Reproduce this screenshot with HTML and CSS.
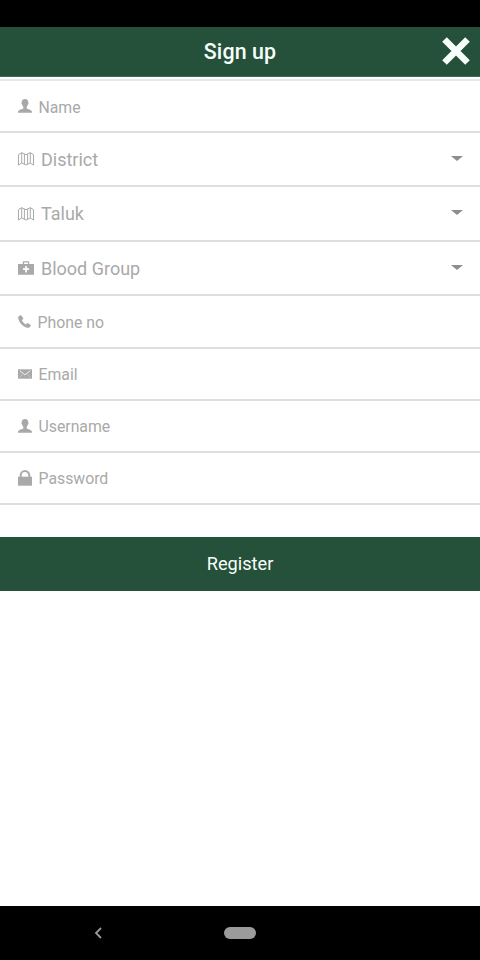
FILE: index.html
```html
<!DOCTYPE html>
<html lang="en">
<head>
<meta charset="utf-8">
<title>Sign up</title>
<link rel="stylesheet" href="styles.css">
</head>
<body>
<svg width="0" height="0" class="defs">
  <symbol id="person" viewBox="0 0 14 14"><path d="M7 0C4.700 0 3.700 1.400 3.700 3.300c0 .5-.4.600-.2 1.400.2.700.5.600.7 1.100C4.500 6.900 5 7.600 5.300 8v1.500C4.500 10.300.4 10.400 0 12.800v.9h14v-.9c-.4-2.400-4.500-2.500-5.300-3.300V8c.3-.4.8-1.100 1.100-2.200.2-.5.5-.4.7-1.100.2-.8-.2-.9-.2-1.400C10.300 1.400 9.300 0 7 0Z"/></symbol>
  <symbol id="map" viewBox="0 0 16 14"><path fill="none" stroke="currentColor" stroke-width="1" d="M.5 2.700 3.700.7 8 2.700l4.300-2L15.500 2.700v10.300L12.300 11 8 13 3.700 11 .5 13ZM3.700.7V11M12.300.7V11M6.400 2v10.200M9.600 2v10.200"/></symbol>
  <symbol id="medkit" viewBox="0 0 16 14"><path fill-rule="evenodd" d="M0 3h4.800V1.200Q4.800.3 5.700.3h4.600q.9 0 .9.900V3H16v10.700H0ZM6 3h4V1.500H6Zm1.200 2v2.300H5v1.800h2.200v2.300h1.700V9.100h2.200V7.300H8.900V5Z"/></symbol>
  <symbol id="phone" viewBox="0 0 13 13"><path d="M2.400.2C.5.700-.2 2.200.3 3.800c1.200 4.300 4.600 7.800 8.900 8.900 1.700.4 3-.4 3.500-2.200.1-.3 0-.5-.3-.7L10 8.200c-.5-.3-.9-.2-1.200.2l-.9 1C6.300 8.500 4.800 7 3.900 5.200l1-.9c.4-.3.500-.7.200-1.200L3.300.5Q2.900 0 2.400.2Z"/></symbol>
  <symbol id="mail" viewBox="0 0 14 10"><path d="M0 .3h14v9.400H0Z"/><path fill="none" stroke="#fff" stroke-width=".8" d="m1.800 1.800 5.200 4 5.200-4"/><path fill="none" stroke="#fff" stroke-width=".4" d="m1.800 8 2.700-2.600M12.200 8 9.500 5.400"/></symbol>
  <symbol id="lock" viewBox="0 0 14 16"><path d="M0 6.700h14v9H0Z"/><path fill="none" stroke="currentColor" stroke-width="2" d="M2.700 7.500V5.300a4.300 4.300 0 0 1 8.600 0v2.200"/></symbol>
</svg>
<div class="screen">
  <div class="status"></div>
  <header class="header">
    <h1 class="title">Sign up</h1>
    <svg class="close" viewBox="0 0 28 28"><path d="M2.500 2.500l23 23m0-23l-23 23"/></svg>
  </header>
  <main class="form">
    <div class="field first"><svg class="icon person"><use href="#person"/></svg><span class="label">Name</span></div>
    <div class="field select"><svg class="icon wide"><use href="#map"/></svg><span class="label">District</span><i class="caret"></i></div>
    <div class="field select tall"><svg class="icon wide"><use href="#map"/></svg><span class="label">Taluk</span><i class="caret"></i></div>
    <div class="field select"><svg class="icon wide"><use href="#medkit"/></svg><span class="label">Blood Group</span><i class="caret"></i></div>
    <div class="field after"><svg class="icon phone"><use href="#phone"/></svg><span class="label">Phone no</span></div>
    <div class="field"><svg class="icon mail"><use href="#mail"/></svg><span class="label">Email</span></div>
    <div class="field"><svg class="icon person"><use href="#person"/></svg><span class="label">Username</span></div>
    <div class="field"><svg class="icon lock"><use href="#lock"/></svg><span class="label">Password</span></div>
  </main>
  <button class="register">Register</button>
  <nav class="nav">
    <svg class="back" viewBox="0 0 8 12"><path d="M7 1 2 6l5 5"/></svg>
    <span class="home"></span>
  </nav>
</div>
</body>
</html>
```

FILE: styles.css
```css
* { box-sizing: border-box; }
body { margin: 0; background: #fff; font-family: Roboto, sans-serif; }
.defs { display: block; }
.screen { display: flex; flex-direction: column; height: 960px; overflow: hidden; }
.status { flex: none; height: 27px; background: #000; }
.header {
  flex: none;
  display: grid;
  grid-template-columns: 1fr auto 1fr;
  align-items: center;
  height: 50px;
  padding: 0 10px 1px;
  background: #255039;
  border-bottom: 1px solid #466b57;
}
.title { grid-column: 2; margin: 0; padding-top: 1px; color: #f7fffa; font-size: 21.400px; font-weight: 500; line-height: 28px; letter-spacing: .1px; }
.close { justify-self: end; width: 28px; height: 28px; fill: none; stroke: #f7fffa; stroke-width: 6.500; }
.form { flex: none; margin-top: 2px; border-top: 2px solid #e0ebe5; }
.field {
  display: flex;
  align-items: center;
  gap: 6.500px;
  height: 52px;
  padding: 0 17.500px 0 18px;
  border-bottom: 2px solid #dedede;
  color: #a9a9a9;
  font-size: 15.800px;
}
.select { gap: 7px; height: 54px; font-size: 18px; }
.tall { height: 55px; }
.after { height: 53px; }
.first .label, .after .label { padding-top: 2px; }
.icon { flex: none; width: 14px; height: 14px; fill: currentColor; }
.wide { width: 16px; }
.phone { width: 13px; height: 13px; }
.mail { height: 10px; }
.lock { height: 16px; }
.caret { margin: 0 0 2px auto; border: 5.500px solid transparent; border-width: 5px 6px 0; border-top-color: #8e8e8e; }
.register {
  flex: none;
  height: 54px;
  margin: 32px 0 0;
  padding: 0 0 2px;
  border: 0;
  background: #255039;
  color: #f7fffa;
  font: 18.200px Roboto, sans-serif;
}
.nav {
  display: grid;
  grid-template-columns: 1fr 32px 1fr;
  align-items: center;
  height: 54px;
  margin-top: auto;
  background: #000;
}
.back { width: 8px; height: 12px; margin-left: 93.500px; fill: none; stroke: #9a9a9a; stroke-width: 1.800; }
.home { height: 12px; border-radius: 6px; background: #9b9b9b; }
```
